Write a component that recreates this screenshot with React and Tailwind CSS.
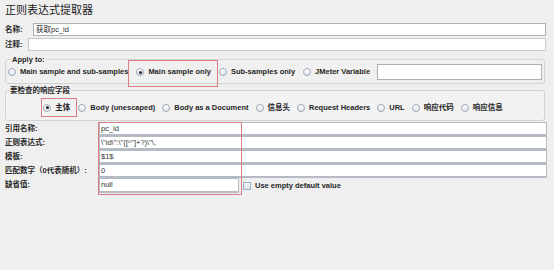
import React from 'react';

const FONT = { fontFamily: '"Liberation Sans", "Noto Sans CJK SC", sans-serif' };

function Radio({ checked, label, className = '' }) {
  return (
    <label className={`flex items-center gap-[4px] ${className}`}>
      <span className="w-[8px] h-[8px] rounded-full border border-[#9ea8b3] bg-gradient-to-b from-white to-[#dfe6ee] flex items-center justify-center shrink-0">
        {checked && <span className="w-[3px] h-[3px] rounded-full bg-[#222]" />}
      </span>
      <span className="font-bold whitespace-nowrap">{label}</span>
    </label>
  );
}

function Field({ value, className = '' }) {
  return (
    <div className={`h-[14px] bg-white border border-[#b4bbc3] border-b-[2px] px-[1px] flex items-center text-[#333] font-normal leading-none ${className}`}>
      {value}
    </div>
  );
}

function App() {
  const labels = ['引用名称:', '正则表达式:', '模板:', '匹配数字（0代表随机）:', '缺省值:'];
  const values = ['pc_id', '\\"id\\":\\"([^"]+?)\\"\\,', '$1$', '0'];

  return (
    <div className="relative w-[554px] h-[270px] overflow-hidden bg-[#efefef] text-[#262626] text-[7.5px]" style={FONT}>
      <div className="h-[23px] pl-[5px] pt-[4px] text-[11px] leading-[13px] text-[#1a1a1a]">正则表达式提取器</div>

      <div className="flex items-center h-[13px] pl-[5px] pr-[8px]">
        <span className="w-[28px] font-bold">名称:</span>
        <div className="flex-1 h-full bg-white border border-[#aab1b9] flex items-center px-[2px]">获取pc_id</div>
      </div>
      <div className="flex items-center h-[13px] mt-[2px] pl-[5px] pr-[8px]">
        <span className="w-[23px] font-bold">注释:</span>
        <div className="flex-1 h-full bg-white border border-[#c4c9cf]" />
      </div>

      <fieldset className="mt-[4px] ml-[5px] mr-[9px] border border-[#d2d2d2] rounded-[3px] px-[2px] pb-[3px] bg-[#f0f0f0]">
        <legend className="ml-[3px] px-[1px] leading-[9px] font-bold">Apply to:</legend>
        <div className="flex items-center h-[16px] gap-[8px]">
          <Radio label="Main sample and sub-samples" />
          <Radio checked label="Main sample only" />
          <Radio label="Sub-samples only" />
          <Radio label="JMeter Variable" />
          <div className="flex-1 h-[16px] ml-[-1px] bg-white border border-[#aab1b9]" />
        </div>
      </fieldset>

      <fieldset className="mt-[2px] ml-[5px] mr-[9px] border border-[#d2d2d2] rounded-[3px] py-[4px] bg-[#f2f2f2]">
        <legend className="ml-[3px] px-[1px] leading-[9px] font-bold">要检查的响应字段</legend>
        <div className="flex items-center justify-center h-[17px] gap-[7px] pr-[4px]">
          <Radio checked label="主体" className="mr-[1px]" />
          <Radio label="Body (unescaped)" />
          <Radio label="Body as a Document" />
          <Radio label="信息头" />
          <Radio label="Request Headers" />
          <Radio label="URL" />
          <Radio label="响应代码" />
          <Radio label="响应信息" />
        </div>
      </fieldset>

      <div className="grid grid-cols-[94px_1fr] mt-[1px] pl-[5px] pr-[7px] font-bold">
        {labels.map((l, i) => (
          <React.Fragment key={l}>
            <div className="h-[14px] flex items-center">{l}</div>
            {i < 4 ? (
              <Field value={values[i]} />
            ) : (
              <div className="flex items-center h-[15px]">
                <Field value="null" className="w-[140px] h-[15px] border-b-[1px]" />
                <span className="ml-[4px] w-[8px] h-[8px] border border-[#9db0c4] bg-gradient-to-b from-[#f4f7fb] to-[#d9e3ee]" />
                <span className="ml-[4px] whitespace-nowrap">Use empty default value</span>
              </div>
            )}
          </React.Fragment>
        ))}
      </div>

      <div className="absolute left-[128px] top-[60px] w-[90px] h-[27px] border border-[#dc7b84]" />
      <div className="absolute left-[41px] top-[98px] w-[36px] h-[19px] border border-[#dc7b84]" />
      <div className="absolute left-[98px] top-[122px] w-[144px] h-[73px] border border-[#dc7b84]" />
    </div>
  );
}

export default App;
